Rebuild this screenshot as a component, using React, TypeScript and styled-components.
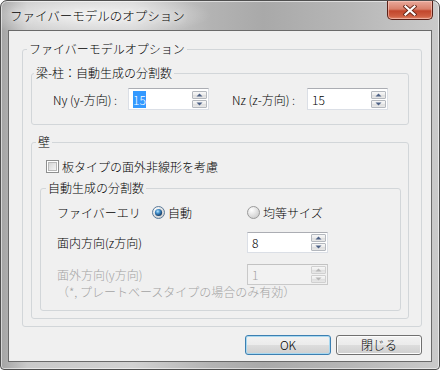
import styled, { createGlobalStyle } from 'styled-components';

const GlobalStyle = createGlobalStyle`
  html, body { margin: 0; padding: 0; background: #ffffff; }
  body {
    font-family: "Noto Sans CJK JP", "Noto Sans", sans-serif;
    font-size: 12px;
    font-weight: 300;
    color: #000;
  }
`;

const Window = styled.div`
  width: 440px;
  height: 370px;
  box-sizing: border-box;
  display: flex;
  flex-direction: column;
  border: 1px solid #4f4f4f;
  border-radius: 7px 7px 4px 4px;
  padding: 0 7px 7px 7px;
  background:
    radial-gradient(ellipse 120px 22px at 90px 14px, rgba(255,255,255,0.75), rgba(255,255,255,0) 100%),
    linear-gradient(90deg, #a4a4a4 0%, #c9c9c9 6%, #d2d2d2 30%, #b3b3b3 48%, #a9a9a9 60%, #b7b7b7 80%, #cacaca 100%);
  box-shadow: inset 0 0 0 1px rgba(255, 255, 255, 0.55);
  overflow: hidden;
`;

const TitleBar = styled.div`
  height: 29px;
  display: flex;
  align-items: flex-start;
  justify-content: space-between;
`;

const Title = styled.div`
  margin: 7px 0 0 2px;
  line-height: 16px;
  font-size: 12.5px;
  color: #000;
  text-shadow: 0 0 6px #fff, 0 0 10px #fff;
`;

const CloseButton = styled.div`
  width: 46px;
  height: 19px;
  margin-right: -1px;
  box-sizing: border-box;
  border: 1px solid #5a2118;
  border-top: none;
  border-radius: 0 0 5px 5px;
  background: linear-gradient(180deg, #e9a99b 0%, #d9806b 45%, #c2462c 55%, #cf5f42 85%, #e08a6e 100%);
  box-shadow: inset 0 0 0 1px rgba(255, 210, 200, 0.55);
  display: flex;
  align-items: center;
  justify-content: center;
`;

const Client = styled.div`
  flex: 1;
  background: #f0f0f0;
  border: 1px solid #6a6a6a;
  display: flex;
  flex-direction: column;
  padding: 11px 9px 0 13px;
`;

const Group = styled.fieldset`
  margin: 0;
  padding: 0;
  min-width: 0;
  border: 1px solid #d2d6d9;
  border-radius: 3px;
`;

const Caption = styled.legend<{ $ml: number }>`
  margin-left: ${p => p.$ml}px;
  padding: 0 2px;
  line-height: 14px;
  font-size: 12px;
`;

const Body = styled.div<{ $pad: string }>`
  display: flex;
  flex-direction: column;
  padding: ${p => p.$pad};
`;

const SubGroup = styled(Group)<{ $mt: number }>`
  margin-top: ${p => p.$mt}px;
`;

const Row = styled.div<{ $mt?: number }>`
  display: flex;
  align-items: center;
  margin-top: ${p => p.$mt ?? 0}px;
`;

const Label = styled.span<{ $w: number; $disabled?: boolean }>`
  width: ${p => p.$w}px;
  flex: none;
  white-space: nowrap;
  font-size: 12px;
  color: ${p => (p.$disabled ? '#a3a3a3' : '#000')};
`;

const Field = styled.div<{ $ml?: number }>`
  display: flex;
  align-items: center;
  margin-left: ${p => p.$ml ?? 0}px;
`;

const SpinBox = styled.div<{ $h: number; $disabled?: boolean }>`
  width: 81px;
  height: ${p => p.$h}px;
  box-sizing: border-box;
  border: 1px solid ${p => (p.$disabled ? '#c9c9c9' : '#dbdfe6')};
  border-top-color: ${p => (p.$disabled ? '#c2c2c2' : '#abadb3')};
  background: ${p => (p.$disabled ? '#f2f2f2' : '#ffffff')};
  display: flex;
  align-items: center;
  justify-content: space-between;
  padding: 1px 1px 1px 4px;
`;

const Value = styled.span<{ $disabled?: boolean }>`
  font-size: 12px;
  line-height: 15px;
  color: ${p => (p.$disabled ? '#a3a3a3' : '#000')};
`;

const Selected = styled.span`
  background: #3399ff;
  color: #fff;
`;

const Spinner = styled.div`
  display: flex;
  flex-direction: column;
  gap: 1px;
  align-self: center;
`;

const SpinBtn = styled.div<{ $disabled?: boolean }>`
  width: 15px;
  height: 8px;
  box-sizing: border-box;
  border: 1px solid ${p => (p.$disabled ? '#d0d0d0' : '#b4b8be')};
  border-radius: 1px;
  background: linear-gradient(180deg, #f7f7f7 0%, #ececec 50%, #dedede 51%, #e8e8e8 100%);
  display: flex;
  align-items: center;
  justify-content: center;
`;

const CheckRow = styled.label`
  display: flex;
  align-items: center;
  gap: 3px;
  margin-left: 6px;
  height: 14px;
  font-size: 12px;
`;

const RadioItem = styled.span<{ $w: number }>`
  width: ${p => p.$w}px;
  display: flex;
  align-items: center;
  gap: 3px;
  flex: none;
`;

const Note = styled.div`
  line-height: 14px;
  color: #a3a3a3;
  white-space: nowrap;
`;

const ButtonBar = styled.div`
  display: flex;
  justify-content: flex-end;
  gap: 5px;
  margin-top: 8px;
`;

const Button = styled.div<{ $default?: boolean }>`
  width: 86px;
  height: 20px;
  box-sizing: border-box;
  border: 1px solid ${p => (p.$default ? '#3c7fb1' : '#707070')};
  border-radius: 3px;
  background: linear-gradient(180deg, #f2f2f2 0%, #ebebeb 49%, #dddddd 50%, #cfcfcf 100%);
  box-shadow: inset 0 0 0 1px ${p => (p.$default ? '#a8d8f0' : '#fcfcfc')};
  display: flex;
  align-items: center;
  justify-content: center;
  font-size: 12px;
  line-height: 14px;
`;

const Arrow = ({ up, disabled }: { up?: boolean; disabled?: boolean }) => (
  <svg width="7" height="4" viewBox="0 0 7 4">
    <path
      d={up ? 'M0.5 3.5 L3.5 0.5 L6.5 3.5 Z' : 'M0.5 0.5 L3.5 3.5 L6.5 0.5 Z'}
      fill={disabled ? '#b8b8b8' : '#4d6185'}
    />
  </svg>
);

const Spin = ({ value, h = 21, selected, disabled }: { value: string; h?: number; selected?: boolean; disabled?: boolean }) => (
  <SpinBox $h={h} $disabled={disabled}>
    <Value $disabled={disabled}>{selected ? <Selected>{value}</Selected> : value}</Value>
    <Spinner>
      <SpinBtn $disabled={disabled}><Arrow up disabled={disabled} /></SpinBtn>
      <SpinBtn $disabled={disabled}><Arrow disabled={disabled} /></SpinBtn>
    </Spinner>
  </SpinBox>
);

const Radio = ({ checked }: { checked?: boolean }) => (
  <svg width="13" height="13" viewBox="0 0 13 13">
    <defs>
      <radialGradient id="rbg" cx="0.35" cy="0.3" r="0.8">
        <stop offset="0" stopColor="#ffffff" />
        <stop offset="1" stopColor="#c9c9c9" />
      </radialGradient>
      <radialGradient id="rdot" cx="0.4" cy="0.35" r="0.7">
        <stop offset="0" stopColor="#b4e4ff" />
        <stop offset="0.45" stopColor="#3b87c4" />
        <stop offset="1" stopColor="#0e2d52" />
      </radialGradient>
    </defs>
    <circle cx="6.5" cy="6.5" r="6" fill="url(#rbg)" stroke={checked ? '#5a7a9a' : '#9a9a9a'} />
    {checked && <circle cx="6.5" cy="6.5" r="3.6" fill="url(#rdot)" />}
  </svg>
);

const Checkbox = () => (
  <svg width="13" height="13" viewBox="0 0 13 13">
    <defs>
      <linearGradient id="cbg" x1="0" y1="0" x2="1" y2="1">
        <stop offset="0" stopColor="#d4d4d4" />
        <stop offset="1" stopColor="#f6f6f6" />
      </linearGradient>
    </defs>
    <rect x="0.5" y="0.5" width="12" height="12" fill="#fff" stroke="#8e8f8f" />
    <rect x="2.5" y="2.5" width="8" height="8" fill="url(#cbg)" stroke="#b8b8b8" />
  </svg>
);

const CloseGlyph = () => (
  <svg width="14" height="11" viewBox="0 0 14 11">
    <path d="M2.5 1.5 L11.5 9.5 M11.5 1.5 L2.5 9.5" stroke="#6b2a1c" strokeWidth="4" strokeLinecap="square" />
    <path d="M2.5 1.5 L11.5 9.5 M11.5 1.5 L2.5 9.5" stroke="#ffffff" strokeWidth="2.2" strokeLinecap="square" />
  </svg>
);

export default function App() {
  return (
    <>
      <GlobalStyle />
      <Window>
        <TitleBar>
          <Title>ファイバーモデルのオプション</Title>
          <CloseButton><CloseGlyph /></CloseButton>
        </TitleBar>
        <Client>
          <Group>
            <Caption $ml={4}>ファイバーモデルオプション</Caption>
            <Body $pad="10px 12px 7px 8px">
              <Group>
                <Caption $ml={2}>梁-柱：自動生成の分割数</Caption>
                <Body $pad="8px 8px 14px 21px">
                  <Row>
                    <Field>
                      <Label $w={75}>Ny (y-方向) :</Label>
                      <Spin value="15" h={22} selected />
                    </Field>
                    <Field $ml={23}>
                      <Label $w={75}>Nz (z-方向) :</Label>
                      <Spin value="15" h={22} />
                    </Field>
                  </Row>
                </Body>
              </Group>

              <SubGroup $mt={10}>
                <Caption $ml={4}>壁</Caption>
                <Body $pad="10px 7px 7px 8px">
                  <CheckRow>
                    <Checkbox />
                    板タイプの面外非線形を考慮
                  </CheckRow>
                  <SubGroup $mt={8}>
                    <Caption $ml={5}>自動生成の分割数</Caption>
                    <Body $pad="9px 8px 11px 16px">
                      <Row>
                        <Label $w={95}>ファイバーエリ</Label>
                        <RadioItem $w={95}><Radio checked />自動</RadioItem>
                        <RadioItem $w={95}><Radio />均等サイズ</RadioItem>
                      </Row>
                      <Row $mt={11}>
                        <Label $w={190}>面内方向(z方向)</Label>
                        <Spin value="8" />
                      </Row>
                      <Row $mt={11}>
                        <Label $w={190} $disabled>面外方向(y方向)</Label>
                        <Spin value="1" disabled />
                      </Row>
                      <Note>（*, プレートベースタイプの場合のみ有効）</Note>
                    </Body>
                  </SubGroup>
                </Body>
              </SubGroup>
            </Body>
          </Group>
          <ButtonBar>
            <Button $default>OK</Button>
            <Button>閉じる</Button>
          </ButtonBar>
        </Client>
      </Window>
    </>
  );
}
